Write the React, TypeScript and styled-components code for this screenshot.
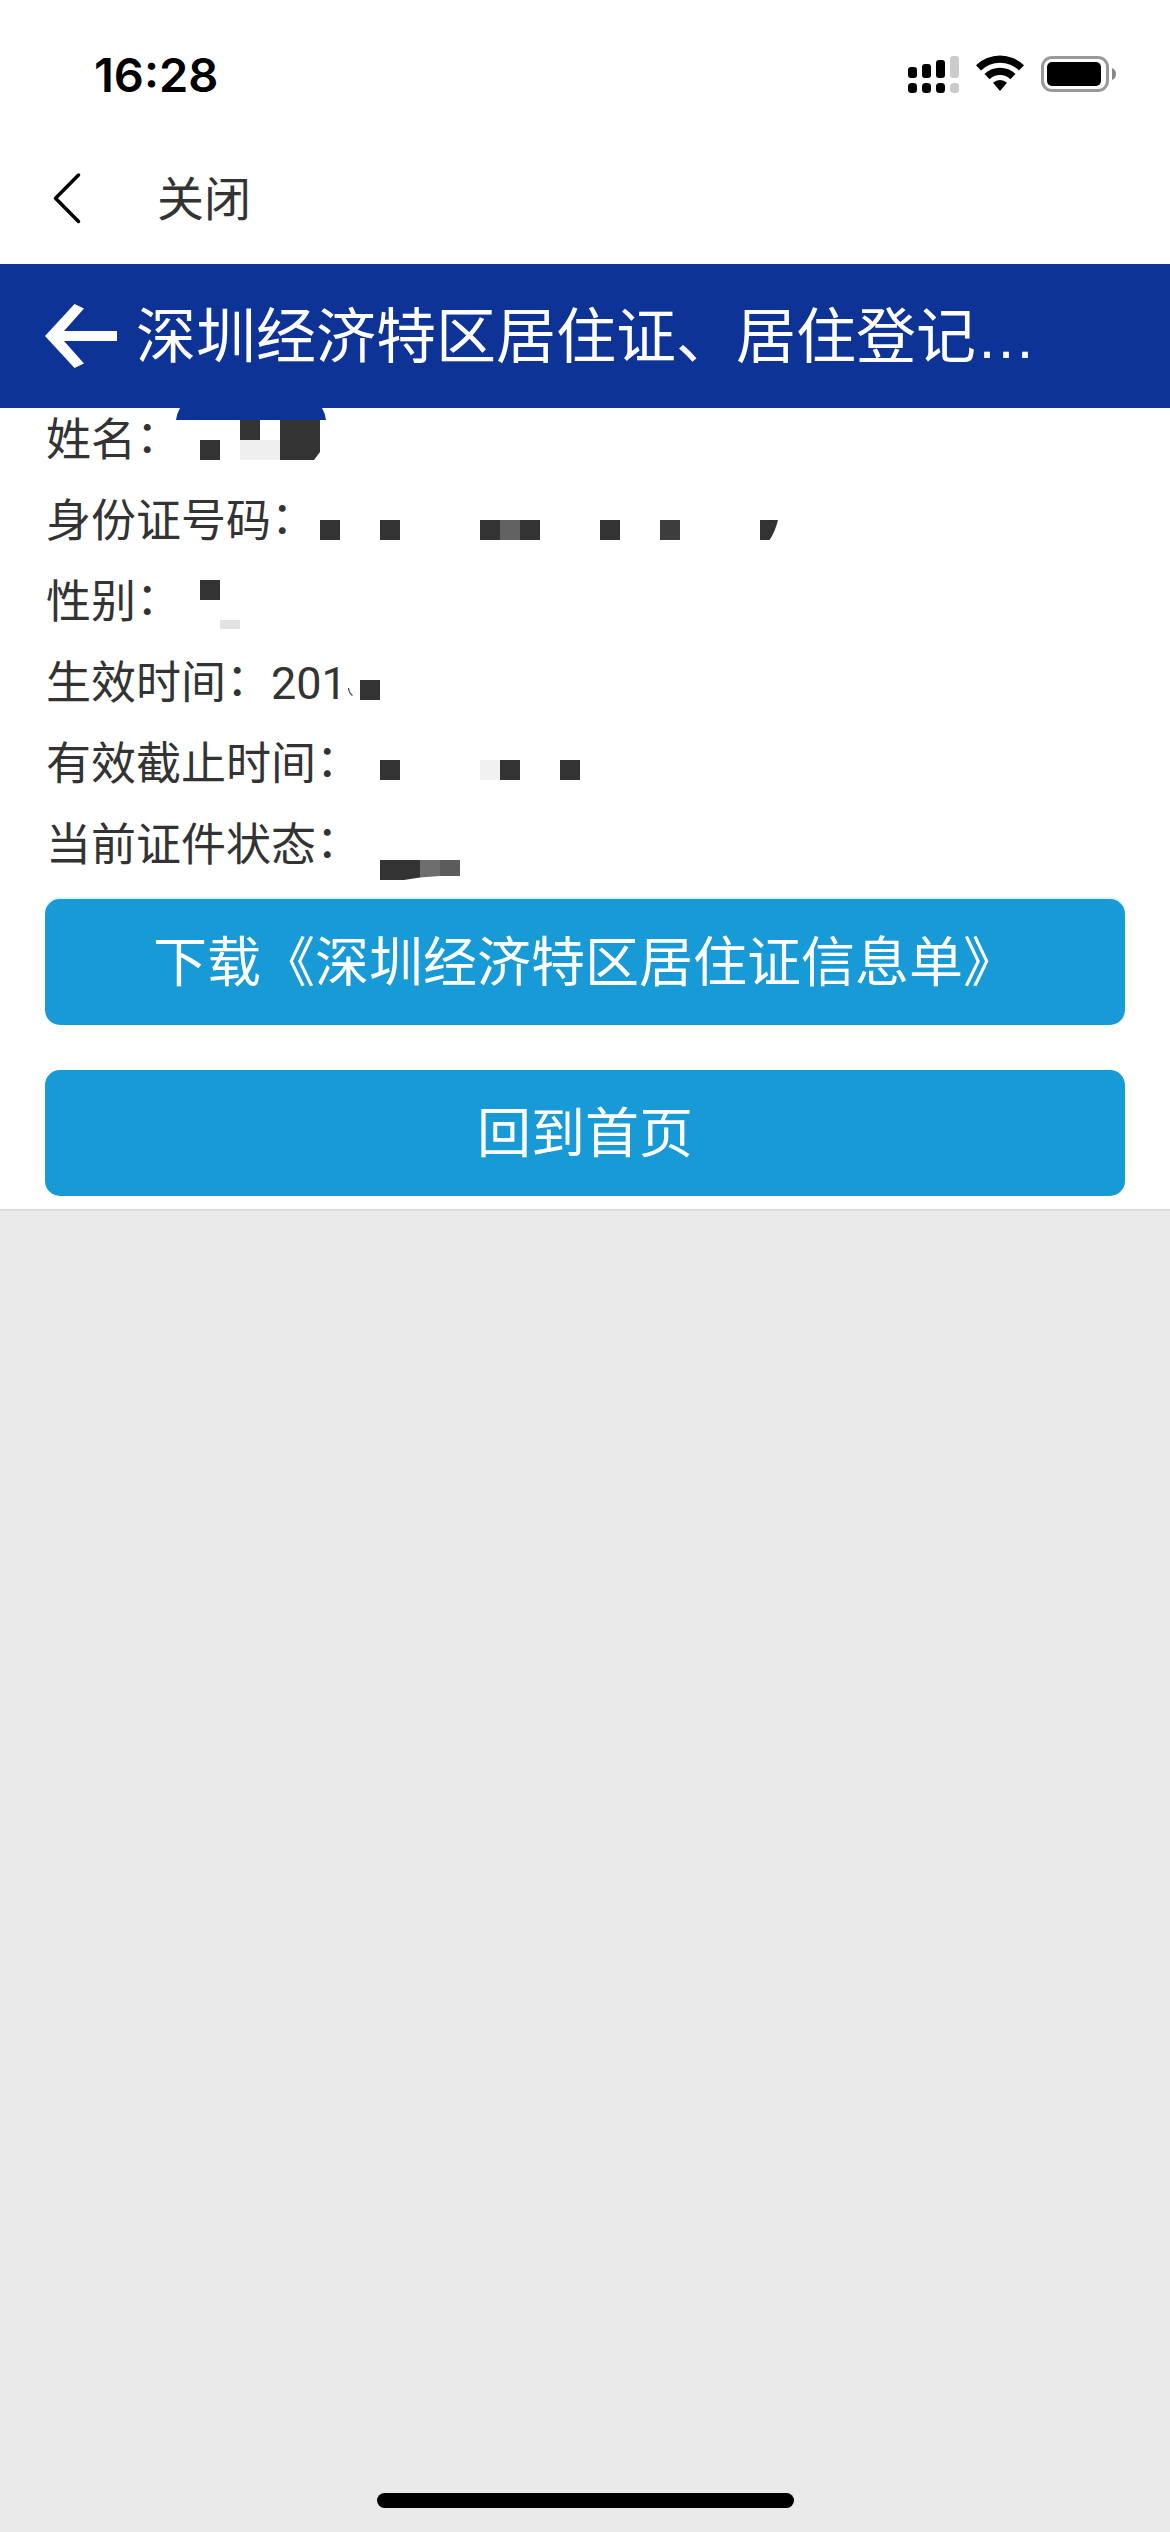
import React from "react";
import styled, { createGlobalStyle } from "styled-components";

const GlobalStyle = createGlobalStyle`
  *, *::before, *::after { box-sizing: border-box; }
  html, body { margin: 0; padding: 0; }
  body { background: #eaeaea; font-family: Roboto, "Noto Sans CJK SC", sans-serif; }
`;

const Screen = styled.main`
  width: 1170px;
  height: 2532px;
  display: flex;
  flex-direction: column;
  background: #eaeaea;
  overflow: hidden;
`;

const StatusBar = styled.header`
  height: 141px;
  flex: none;
  display: flex;
  align-items: flex-start;
  justify-content: space-between;
  padding: 46px 54px 0 94px;
  background: #fff;
`;

const Clock = styled.time`
  font: 600 47px/58px Inter, sans-serif;
  color: #000;
`;

const StatusIcons = styled.svg`
  display: block;
  width: 210px;
  height: 40px;
  margin-top: 7px;
`;

const NavBar = styled.nav`
  height: 123px;
  flex: none;
  display: flex;
  align-items: center;
  gap: 75px;
  padding: 0 0 9px 52px;
  background: #fff;
`;

const PlainButton = styled.button`
  display: flex;
  padding: 0;
  border: 0;
  background: none;
  font: inherit;
  color: inherit;
`;

const CloseButton = styled(PlainButton)`
  padding-top: 3px;
  font-size: 47px;
  line-height: 68px;
  color: #333;
`;

const TitleBar = styled.div`
  height: 144px;
  flex: none;
  display: flex;
  align-items: center;
  gap: 18px;
  padding-left: 45px;
  background: #0e3397;
  color: #fff;
`;

const Title = styled.h1`
  margin: 0;
  padding-top: 4px;
  font: 400 60px/88px "Liberation Sans", "Noto Sans CJK SC", sans-serif;
  white-space: nowrap;
`;

const Panel = styled.section`
  height: 803px;
  flex: none;
  position: relative;
  display: flex;
  flex-direction: column;
  background: #fff;
  border-bottom: 2px solid #dadada;
`;

const Fields = styled.dl`
  margin: 0;
  height: 491px;
  padding: 0 46px;
`;

const Field = styled.div`
  height: 81px;
  display: flex;
  align-items: center;
  padding-bottom: 17px;
  font-size: 45px;
  line-height: 61px;
  color: #333;
`;

const Label = styled.dt`
  display: flex;
`;

const Colon = styled.span`
  transform: translateY(-3px);
`;

const Value = styled.dd`
  margin: 0;
`;

const Mosaic = styled.svg`
  position: absolute;
  left: 0;
  top: 0;
  width: 1170px;
  height: 480px;
  pointer-events: none;
`;

const Actions = styled.div`
  display: flex;
  flex-direction: column;
  gap: 45px;
  padding: 0 45px;
`;

const ActionButton = styled.button<{ $glow?: boolean }>`
  height: 126px;
  padding: 0 0 7px;
  border: 0;
  border-radius: 15px;
  background: #179ad5;
  color: #fff;
  font: 400 54px/78px "Noto Sans CJK SC", sans-serif;
  box-shadow: ${(p) => (p.$glow ? "0 -2px 0 #dcf5f7" : "none")};
`;

const HomeArea = styled.footer`
  flex: 1;
  display: flex;
  align-items: flex-end;
  justify-content: center;
  padding-bottom: 24px;
`;

const HomeIndicator = styled.div`
  width: 417px;
  height: 15px;
  border-radius: 8px;
  background: #000;
`;

type Block = { x: number; y: number; w?: number; h?: number; fill?: string };

const blocks: Block[] = [
  { x: 200, y: 32 },
  { x: 240, y: 12 },
  { x: 240, y: 32, w: 40, fill: "#efefef" },
  { x: 320, y: 112 },
  { x: 380, y: 112 },
  { x: 480, y: 112 },
  { x: 500, y: 112, fill: "#626262" },
  { x: 520, y: 112 },
  { x: 600, y: 112 },
  { x: 660, y: 112, fill: "#3d3d3d" },
  { x: 200, y: 172 },
  { x: 220, y: 212, h: 9, fill: "#e3e3e3" },
  { x: 360, y: 272 },
  { x: 380, y: 352 },
  { x: 480, y: 352, fill: "#f1f1f1" },
  { x: 500, y: 352 },
  { x: 560, y: 352 },
  { x: 440, y: 452, h: 16, fill: "#5c5c5c" },
];

const fields = [
  { label: "姓名" },
  { label: "身份证号码" },
  { label: "性别" },
  { label: "生效时间", value: "201" },
  { label: "有效截止时间" },
  { label: "当前证件状态" },
];

const bars = [
  { x: 2, top: 14, fill: "#000" },
  { x: 16, top: 11, fill: "#000" },
  { x: 30, top: 7, fill: "#000" },
  { x: 44, top: 3, fill: "#cbcbcb" },
];

export default function App() {
  return (
    <>
      <GlobalStyle />
      <Screen>
        <StatusBar>
          <Clock>16:28</Clock>
          <StatusIcons viewBox="0 0 210 40">
            {bars.map((b) => (
              <g key={b.x} fill={b.fill}>
                <rect x={b.x} y={b.top} width="9" height={25 - b.top} rx="3" />
                <rect x={b.x} y="30" width="9" height="10" rx="3.5" />
              </g>
            ))}
            <path d="M70 12.3a34.5 34.5 0 0 1 48 0l-5 5.1a27.2 27.2 0 0 0-38 0z" />
            <path d="M78.500 21a22.300 22.300 0 0 1 31 0l-5.200 5.200a15 15 0 0 0-20.600 0z" />
            <path d="M87 29.700a10.200 10.200 0 0 1 14 0l-7 8.300z" />
            <rect x="136.500" y="4.500" width="65" height="33" rx="9.500" fill="none" stroke="#999" strokeWidth="3" />
            <rect x="141" y="9" width="54" height="24" rx="5" />
            <path d="M206 15q4 1.500 4 6t-4 6z" fill="#888" />
          </StatusIcons>
        </StatusBar>
        <NavBar>
          <PlainButton aria-label="返回">
            <svg width="30" height="52" viewBox="0 0 30 52">
              <path d="M26.500 3L3.500 26.300L26.500 49.500" fill="none" stroke="#000" strokeWidth="3.500" strokeLinecap="round" strokeLinejoin="round" />
            </svg>
          </PlainButton>
          <CloseButton>关闭</CloseButton>
        </NavBar>
        <TitleBar>
          <PlainButton aria-label="后退">
            <svg width="73" height="64" viewBox="0 0 73 64">
              <path d="M0 32L29.500 0L39 4.500L19 27H72V37H19L39 59.500L29.500 64Z" fill="#fff" />
            </svg>
          </PlainButton>
          <Title>深圳经济特区居住证、居住登记…</Title>
        </TitleBar>
        <Panel>
          <Fields>
            {fields.map((f) => (
              <Field key={f.label}>
                <Label>
                  {f.label}
                  <Colon>：</Colon>
                </Label>
                {f.value && <Value>{f.value}</Value>}
              </Field>
            ))}
          </Fields>
          <Mosaic viewBox="0 0 1170 480">
            <path d="M180 0H322Q325 5 326 12H176Q177 5 180 0Z" fill="#0e3397" />
            {blocks.map((b) => (
              <rect key={`${b.x}-${b.y}`} x={b.x} y={b.y} width={b.w ?? 20} height={b.h ?? 20} fill={b.fill ?? "#333"} shapeRendering="crispEdges" />
            ))}
            <path d="M280 12H320V44L314 52H280Z" fill="#333" />
            <path d="M760 112H778Q775 124 769.500 132H760Z" fill="#333" />
            <path d="M348.500 280Q349 285 352.500 287.500" fill="none" stroke="#444" strokeWidth="1.200" />
            <path d="M380 452H420V469.500L404 472H380Z" fill="#333" />
            <path d="M420 452H440V468L420 469.500Z" fill="#6e6e6e" />
          </Mosaic>
          <Actions>
            <ActionButton $glow>下载《深圳经济特区居住证信息单》</ActionButton>
            <ActionButton>回到首页</ActionButton>
          </Actions>
        </Panel>
        <HomeArea>
          <HomeIndicator />
        </HomeArea>
      </Screen>
    </>
  );
}
